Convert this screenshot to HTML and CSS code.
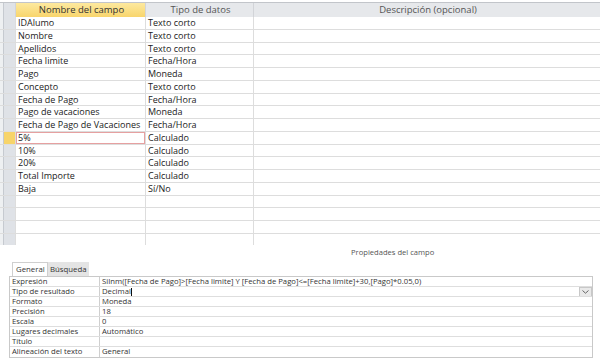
FILE: index.html
```html
<!DOCTYPE html>
<html lang="es">
<head>
  <meta charset="UTF-8" />
  <title>Diseño de tabla</title>
  <link rel="stylesheet" href="styles.css">
</head>
<body>

  <!-- cuadrícula de campos -->
  <div class="design">
    <div class="row head">
      <div class="sel"></div>
      <div class="cell name">Nombre del campo</div>
      <div class="cell">Tipo de datos</div>
      <div class="cell">Descripción (opcional)</div>
    </div>
    <div class="rows">
      <div class="row"><div class="sel"></div><div class="cell">IDAlumo</div><div class="cell">Texto corto</div><div class="cell"></div></div>
      <div class="row"><div class="sel"></div><div class="cell">Nombre</div><div class="cell">Texto corto</div><div class="cell"></div></div>
      <div class="row"><div class="sel"></div><div class="cell">Apellidos</div><div class="cell">Texto corto</div><div class="cell"></div></div>
      <div class="row"><div class="sel"></div><div class="cell">Fecha limite</div><div class="cell">Fecha/Hora</div><div class="cell"></div></div>
      <div class="row"><div class="sel"></div><div class="cell">Pago</div><div class="cell">Moneda</div><div class="cell"></div></div>
      <div class="row"><div class="sel"></div><div class="cell">Concepto</div><div class="cell">Texto corto</div><div class="cell"></div></div>
      <div class="row"><div class="sel"></div><div class="cell">Fecha de Pago</div><div class="cell">Fecha/Hora</div><div class="cell"></div></div>
      <div class="row"><div class="sel"></div><div class="cell">Pago de vacaciones</div><div class="cell">Moneda</div><div class="cell"></div></div>
      <div class="row"><div class="sel"></div><div class="cell">Fecha de Pago de Vacaciones</div><div class="cell">Fecha/Hora</div><div class="cell"></div></div>
      <div class="row"><div class="sel current"></div><div class="cell focus">5%</div><div class="cell">Calculado</div><div class="cell"></div></div>
      <div class="row"><div class="sel"></div><div class="cell">10%</div><div class="cell">Calculado</div><div class="cell"></div></div>
      <div class="row"><div class="sel"></div><div class="cell">20%</div><div class="cell">Calculado</div><div class="cell"></div></div>
      <div class="row"><div class="sel"></div><div class="cell">Total Importe</div><div class="cell">Calculado</div><div class="cell"></div></div>
      <div class="row"><div class="sel"></div><div class="cell">Baja</div><div class="cell">Sí/No</div><div class="cell"></div></div>
      <div class="row"><div class="sel"></div><div class="cell"></div><div class="cell"></div><div class="cell"></div></div>
      <div class="row"><div class="sel"></div><div class="cell"></div><div class="cell"></div><div class="cell"></div></div>
      <div class="row"><div class="sel"></div><div class="cell"></div><div class="cell"></div><div class="cell"></div></div>
      <div class="row"><div class="sel"></div><div class="cell"></div><div class="cell"></div><div class="cell"></div></div>
    </div>
  </div>

  <!-- propiedades del campo -->
  <div class="props">
    <div class="props-title">Propiedades del campo</div>
    <div class="tabs">
      <span class="tab active">General</span>
      <span class="tab">Búsqueda</span>
    </div>
    <div class="sheet">
      <div class="prop"><div class="label">Expresión</div><div class="value">SiInm([Fecha de Pago]&gt;[Fecha limite] Y [Fecha de Pago]&lt;=[Fecha limite]+30,[Pago]*0.05,0)</div></div>
      <div class="prop"><div class="label">Tipo de resultado</div><div class="value editing">Decimal<span class="caret"></span><span class="drop"><svg width="7" height="4" viewBox="0 0 7 4"><path d="M0.5 0.5 L3.5 3.2 L6.5 0.5" fill="none" stroke="#666" stroke-width="1"/></svg></span></div></div>
      <div class="prop"><div class="label">Formato</div><div class="value">Moneda</div></div>
      <div class="prop"><div class="label">Precisión</div><div class="value">18</div></div>
      <div class="prop"><div class="label">Escala</div><div class="value">0</div></div>
      <div class="prop"><div class="label">Lugares decimales</div><div class="value">Automático</div></div>
      <div class="prop"><div class="label">Título</div><div class="value"></div></div>
      <div class="prop"><div class="label">Alineación del texto</div><div class="value">General</div></div>
    </div>
  </div>

</body>
</html>
```

FILE: styles.css
```css
body {
  margin: 0;
  width: 600px;
  height: 362px;
  overflow: hidden;
  background-color: white;
  color: #222;
  font-family: 'Open Sans', 'Noto Sans', sans-serif;
}

.design {
  margin-top: 2px;
  border-top: 1px solid #c2c5ca;
}

.row {
  display: grid;
  grid-template-columns: 15px 130px 108px 1fr;
}

.head {
  height: 14px;
  background-color: #e6e8eb;
  color: #555;
  font-size: 9.5px;
  line-height: 14px;
  text-align: center;
}

.head .cell {
  border-left: 1px solid #d2d4d8;
}

.head .name {
  background: linear-gradient(#fde99f, #f8d56c);
  color: #333;
}

.rows {
  height: 228px;
  overflow: hidden;
}

.rows .row {
  height: 12.75px;
  box-sizing: border-box;
  border-bottom: 1px solid #dddddd;
  font-size: 9px;
  line-height: 12px;
}

.cell {
  padding-left: 2px;
  white-space: nowrap;
  overflow: hidden;
}

.rows .cell {
  border-left: 1px solid #dddddd;
}

.sel {
  background: linear-gradient(to right, #eef0f2 0 3px, #c6cad0 3px 4px, #dfe2e7 4px);
}

.sel.current {
  background: linear-gradient(to right, #eef0f2 0 3px, #c6cad0 3px 4px, #f7d46a 4px);
}

.cell.focus {
  box-shadow: inset 0 0 0 1px #e6a0a0;
}

.props-title {
  margin-top: 1px;
  padding-left: 351px;
  height: 12px;
  line-height: 12px;
  font-size: 7.6px;
  color: #555;
}

.tabs {
  display: flex;
  margin-top: 4px;
  padding-left: 12px;
  height: 14px;
  font-size: 7.8px;
  line-height: 14px;
}

.tab {
  padding: 0 2px;
  background-color: #e4e4e4;
  color: #333;
}

.tab.active {
  box-sizing: border-box;
  width: 36px;
  padding: 0 3px;
  background-color: white;
  border: 1px solid #cfcfcf;
  border-bottom: none;
  line-height: 13px;
}

.sheet {
  margin: 0 7px 0 9px;
  border: 1px solid #c9c9c9;
}

.prop {
  display: grid;
  grid-template-columns: 90px 1fr;
  height: 10px;
  box-sizing: border-box;
  border-bottom: 1px solid #dedede;
  font-size: 7.7px;
  line-height: 9px;
  color: #333;
}

.prop:last-child {
  border-bottom: none;
}

.label {
  padding-left: 2px;
  border-right: 1px solid #cfcfcf;
  white-space: nowrap;
}

.value {
  padding-left: 2px;
  white-space: nowrap;
  overflow: hidden;
}

.value.editing {
  display: flex;
  align-items: center;
}

.caret {
  width: 1px;
  height: 8px;
  background-color: #111;
}

.drop {
  display: flex;
  align-items: center;
  justify-content: center;
  margin-left: auto;
  width: 11px;
  height: 8px;
  background-color: #e9e9e9;
  border: 1px solid #c8c8c8;
}
```
